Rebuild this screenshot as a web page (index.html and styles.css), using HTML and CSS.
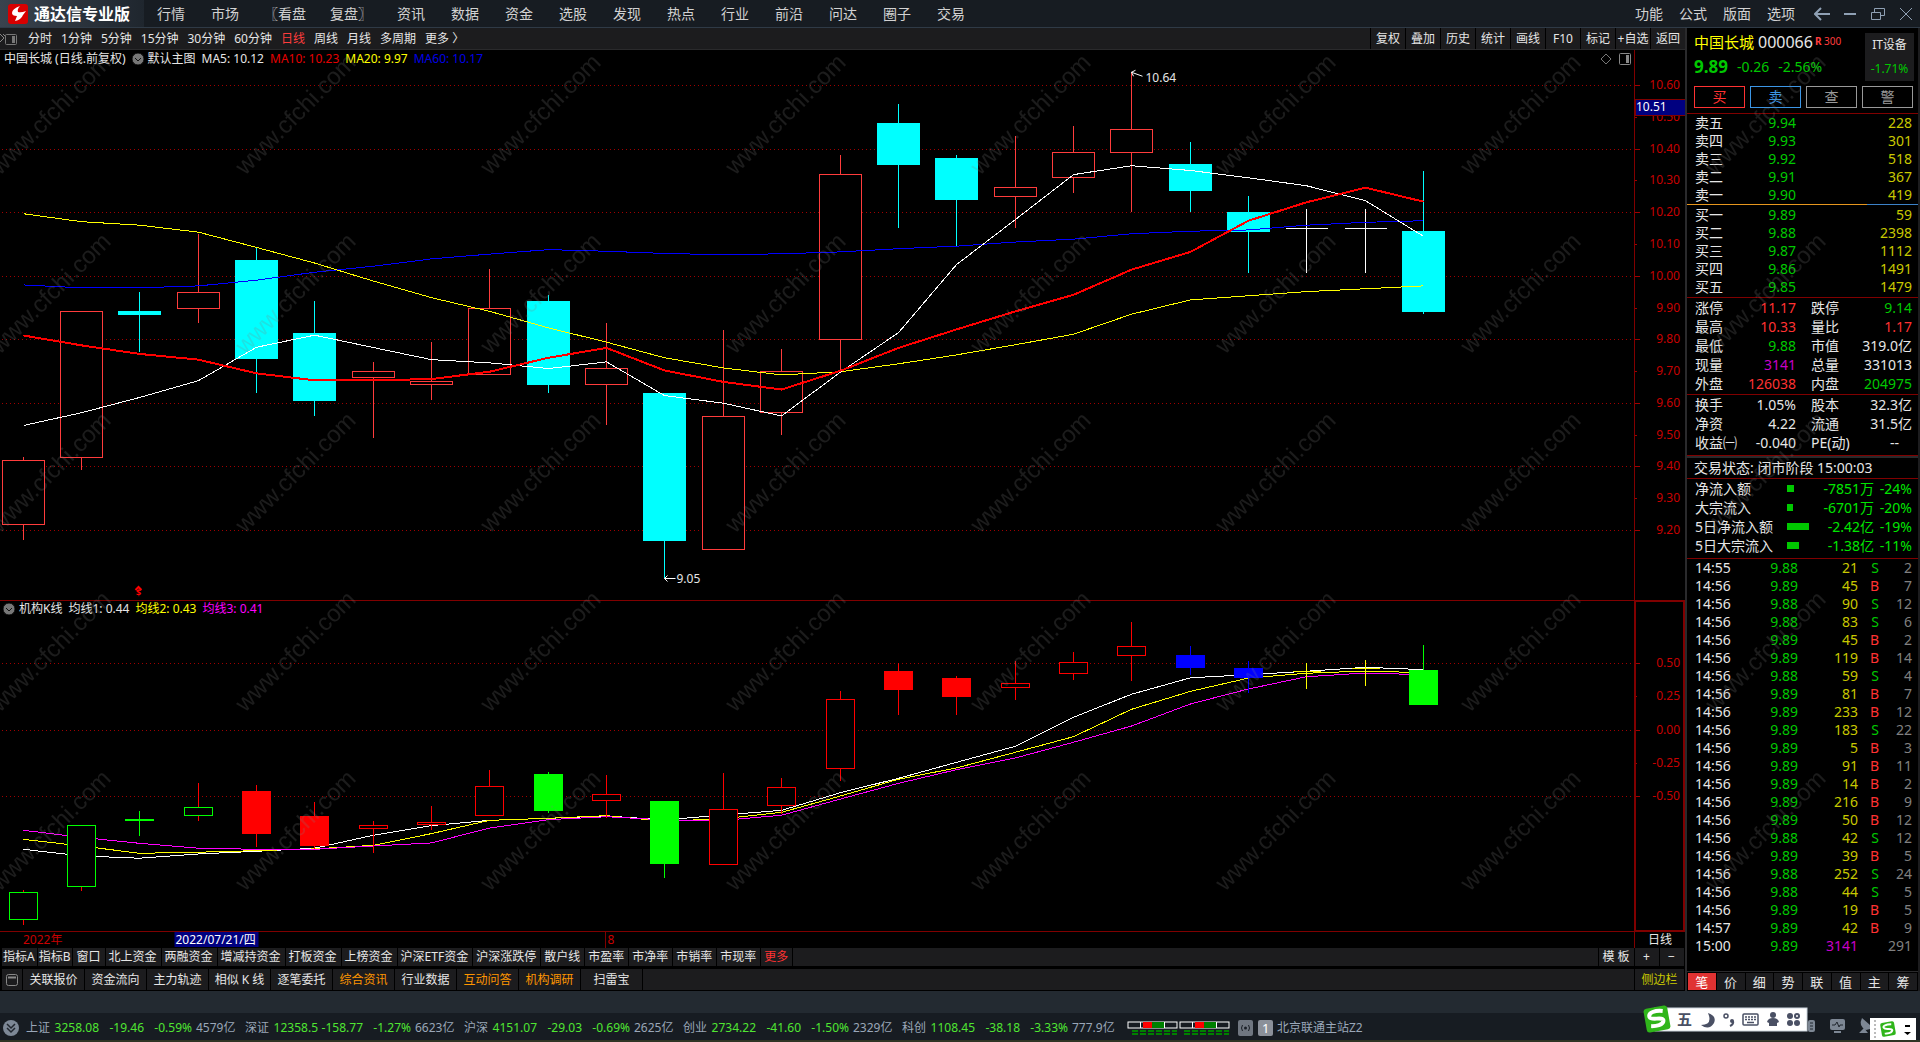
FILE: index.html
```
<!DOCTYPE html>
<html lang="zh-CN">
<head>
  <meta charset="UTF-8" />
  <meta name="viewport" content="width=device-width, initial-scale=1.0" />
  <title>通达信专业版</title>
  <link rel="stylesheet" href="styles.css">
</head>
<body>
  <header class="topbar">
    <div class="brand">
      <svg class="brand-logo" width="20" height="20" viewBox="0 0 20 20">
        <rect width="20" height="20" rx="3" fill="#d80000" />
        <path d="M12 2 Q4 5 4 9 Q4 12 9 12 L7 17 Q13 16 15 11 L18 7 Q13 9 10 8 Q9 5 12 2 Z" fill="#fff" />
      </svg>
      <h1>通达信专业版</h1>
    </div>
    <nav class="menu">
      <a href="#">行情</a>
      <a href="#">市场</a>
      <a href="#" class="group">〖看盘</a>
      <a href="#" class="group">复盘〗</a>
      <a href="#">资讯</a>
      <a href="#">数据</a>
      <a href="#">资金</a>
      <a href="#">选股</a>
      <a href="#">发现</a>
      <a href="#">热点</a>
      <a href="#">行业</a>
      <a href="#">前沿</a>
      <a href="#">问达</a>
      <a href="#">圈子</a>
      <a href="#">交易</a>
    </nav>
    <nav class="menu-right">
      <a href="#">功能</a>
      <a href="#">公式</a>
      <a href="#">版面</a>
      <a href="#">选项</a>
    </nav>
    <div class="window-buttons">
      <button aria-label="后退"><svg width="16" height="14" viewBox="0 0 16 14"><path d="M7 1 L1 7 L7 13 M1 7 H16" /></svg></button>
      <button aria-label="最小化"><svg width="16" height="14" viewBox="0 0 16 14"><path d="M2 7 H14" /></svg></button>
      <button aria-label="还原"><svg width="16" height="14" viewBox="0 0 16 14"><path class="thin" d="M1.5 5.5 H10.5 V12.5 H1.5 Z M4.5 5 V1.5 H14.5 V8.5 H11" /></svg></button>
      <button aria-label="关闭"><svg width="16" height="14" viewBox="0 0 16 14"><path class="thin" d="M2 1 L14 13 M14 1 L2 13" /></svg></button>
    </div>
  </header>

  <main class="workspace">
    <section class="left">
      <div class="toolbar">
        <button class="expand" aria-label="展开">
          <svg width="18" height="12" viewBox="0 0 18 12"><path d="M0 1 L4 5 L0 9 M3 1 L6 4" fill="none" stroke="#888" /><rect x="5.500" y="1.500" width="11" height="10" rx="1" fill="none" stroke="#777" /><rect x="12" y="3" width="3" height="7" fill="#777" /></svg>
        </button>
        <nav class="periods">
          <a href="#">分时</a>
          <a href="#">1分钟</a>
          <a href="#">5分钟</a>
          <a href="#">15分钟</a>
          <a href="#">30分钟</a>
          <a href="#">60分钟</a>
          <a href="#" class="active">日线</a>
          <a href="#">周线</a>
          <a href="#">月线</a>
          <a href="#">多周期</a>
          <a href="#">更多 〉</a>
        </nav>
        <div class="tools">
          <button>复权</button>
          <button>叠加</button>
          <button>历史</button>
          <button>统计</button>
          <button>画线</button>
          <button>F10</button>
          <button>标记</button>
          <button>+自选</button>
          <button>返回</button>
        </div>
      </div>

      <div class="panel panel-main">
        <div class="panel-head">
          <span>中国长城 (日线.前复权)</span>
          <svg class="drop" width="12" height="12" viewBox="0 0 12 12"><circle cx="6" cy="6" r="6" fill="#777" /><path d="M3 5 L6 8 L9 5" /></svg>
          <span>默认主图</span>
          <span class="gap">MA5: 10.12</span>
          <span class="gap ma10">MA10: 10.23</span>
          <span class="gap yellow">MA20: 9.97</span>
          <span class="gap blue">MA60: 10.17</span>
        </div>
        <div class="panel-icons">
          <svg width="12" height="12" viewBox="0 0 12 12"><path d="M6 1 L11 6 L6 11 L1 6 Z" fill="none" stroke="#777" /></svg>
          <svg width="12" height="12" viewBox="0 0 12 12"><rect x=".5" y=".5" width="11" height="11" rx="1" fill="none" stroke="#888" /><rect x="7" y="2" width="3" height="8" fill="#888" /></svg>
        </div>
        <svg class="chart" id="main-chart"></svg>
      </div>

      <div class="panel panel-sub">
        <div class="panel-head">
          <svg class="drop first" width="12" height="12" viewBox="0 0 12 12"><circle cx="6" cy="6" r="6" fill="#777" /><path d="M3 5 L6 8 L9 5" /></svg>
          <span>机构K线</span>
          <span class="gap">均线1: 0.44</span>
          <span class="gap yellow">均线2: 0.43</span>
          <span class="gap magenta">均线3: 0.41</span>
        </div>
        <svg class="chart" id="sub-chart"></svg>
      </div>

      <div class="dates">
        <svg class="date-axis" id="date-axis"></svg>
        <span class="date-period">日线</span>
      </div>

      <div class="tabs tabs-indicator">
        <button class="tight">指标A</button>
        <button class="tight">指标B</button>
        <button>窗口</button>
        <button>北上资金</button>
        <button>两融资金</button>
        <button>增减持资金</button>
        <button>打板资金</button>
        <button>上榜资金</button>
        <button>沪深ETF资金</button>
        <button>沪深涨跌停</button>
        <button>散户线</button>
        <button>市盈率</button>
        <button>市净率</button>
        <button>市销率</button>
        <button>市现率</button>
        <button class="red">更多</button>
        <span class="fill"></span>
        <button class="template">模 板</button>
        <button class="zoom">+</button>
        <button class="zoom">−</button>
      </div>
      <div class="tabs tabs-info">
        <button class="icon" aria-label="窗口"><svg width="12" height="12" viewBox="0 0 12 12"><rect x=".5" y=".5" width="11" height="11" rx="2" fill="none" stroke="#888" /><path d="M2 3.500 H10" stroke="#888" stroke-width="2" /></svg></button>
        <button>关联报价</button>
        <button>资金流向</button>
        <button>主力轨迹</button>
        <button>相似 K 线</button>
        <button>逐笔委托</button>
        <button class="orange">综合资讯</button>
        <button>行业数据</button>
        <button class="orange">互动问答</button>
        <button class="orange">机构调研</button>
        <button>扫雷宝</button>
        <span class="fill"></span>
        <button class="side-toggle">侧边栏</button>
      </div>
    </section>

    <aside class="quote">
      <div class="quote-head">
        <div class="quote-title">
          <div class="name-line"><span class="name">中国长城</span><span class="code">000066</span><span class="flags"><b>R</b> 300</span></div>
          <div class="price-line"><b>9.89</b><span>-0.26</span><span>-2.56%</span></div>
        </div>
        <div class="sector"><span>IT设备</span><span class="green">-1.71%</span></div>
      </div>
      <div class="trade">
        <button class="buy">买</button>
        <button class="sell">卖</button>
        <button>查</button>
        <button>警</button>
      </div>

      <table class="book">
        <tr><th>卖五</th><td class="green">9.94</td><td class="vol">228</td></tr>
        <tr><th>卖四</th><td class="green">9.93</td><td class="vol">301</td></tr>
        <tr><th>卖三</th><td class="green">9.92</td><td class="vol">518</td></tr>
        <tr><th>卖二</th><td class="green">9.91</td><td class="vol">367</td></tr>
        <tr><th>卖一</th><td class="green">9.90</td><td class="vol">419</td></tr>
      </table>
      <div class="ratio"></div>
      <table class="book bids">
        <tr><th>买一</th><td class="green">9.89</td><td class="vol">59</td></tr>
        <tr><th>买二</th><td class="green">9.88</td><td class="vol">2398</td></tr>
        <tr><th>买三</th><td class="green">9.87</td><td class="vol">1112</td></tr>
        <tr><th>买四</th><td class="green">9.86</td><td class="vol">1491</td></tr>
        <tr><th>买五</th><td class="green">9.85</td><td class="vol">1479</td></tr>
      </table>

      <table class="stats">
        <tr><th>涨停</th><td class="red">11.17</td><th>跌停</th><td class="green">9.14</td></tr>
        <tr><th>最高</th><td class="red">10.33</td><th>量比</th><td class="red">1.17</td></tr>
        <tr><th>最低</th><td class="green">9.88</td><th>市值</th><td>319.0亿</td></tr>
        <tr><th>现量</th><td class="purple">3141</td><th>总量</th><td>331013</td></tr>
        <tr><th>外盘</th><td class="red">126038</td><th>内盘</th><td class="green">204975</td></tr>
      </table>
      <table class="stats basics">
        <tr><th>换手</th><td>1.05%</td><th>股本</th><td>32.3亿</td></tr>
        <tr><th>净资</th><td>4.22</td><th>流通</th><td>31.5亿</td></tr>
        <tr><th>收益㈠</th><td>-0.040</td><th>PE(动)</th><td class="none">--</td></tr>
      </table>

      <p class="state">交易状态: 闭市阶段 15:00:03</p>

      <table class="flow">
        <tr><th>净流入额</th><td class="bar"><i style="width: 7px"></i></td><td>-7851万</td><td>-24%</td></tr>
        <tr><th>大宗流入</th><td class="bar"><i style="width: 6px"></i></td><td>-6701万</td><td>-20%</td></tr>
        <tr><th>5日净流入额</th><td class="bar"><i style="width: 22px"></i></td><td>-2.42亿</td><td>-19%</td></tr>
        <tr><th>5日大宗流入</th><td class="bar"><i style="width: 12px"></i></td><td>-1.38亿</td><td>-11%</td></tr>
      </table>

      <table class="ticks" id="ticks"></table>

      <div class="tabs tabs-quote">
        <button class="active">笔</button>
        <button>价</button>
        <button>细</button>
        <button>势</button>
        <button>联</button>
        <button>值</button>
        <button>主</button>
        <button>筹</button>
      </div>
    </aside>

    <svg class="watermark" aria-hidden="true">
      <defs>
        <pattern id="wm" x="-22" y="0" width="245" height="179" patternUnits="userSpaceOnUse">
          <text x="22" y="148" transform="rotate(-45 22 148)">www.cfchi.com</text>
        </pattern>
      </defs>
      <rect width="100%" height="100%" fill="url(#wm)" />
    </svg>
  </main>

  <footer class="status">
    <svg class="status-icon" width="16" height="16" viewBox="0 0 16 16"><circle cx="8" cy="8" r="8" fill="#7d8896" /><path d="M4 4 L8 8 L12 4 M4 8 L8 12 L12 8" fill="none" stroke="#20262e" stroke-width="1.500" /></svg>
    <div class="index"><span>上证</span><b>3258.08</b><b>-19.46</b><b>-0.59%</b><span>4579亿</span></div>
    <div class="index"><span>深证</span><b>12358.5</b><b>-158.77</b><b>-1.27%</b><span>6623亿</span></div>
    <div class="index"><span>沪深</span><b>4151.07</b><b>-29.03</b><b>-0.69%</b><span>2625亿</span></div>
    <div class="index"><span>创业</span><b>2734.22</b><b>-41.60</b><b>-1.50%</b><span>2329亿</span></div>
    <div class="index"><span>科创</span><b>1108.45</b><b>-38.18</b><b>-3.33%</b><span>777.9亿</span></div>
    <svg class="meter" width="104" height="14" viewBox="0 0 104 14">
      <g id="meter-one">
        <rect x="1" y="1" width="49" height="6" fill="#171c22" stroke="#fff" />
        <rect x="16" y="1" width="9" height="6" fill="#f00" />
        <rect x="25" y="1" width="12" height="6" fill="#008000" />
        <path d="M13.500 1 V7 M37.500 1 V7" stroke="#fff" />
        <path d="M5 10 H50 M5 13 H50" stroke="#008000" stroke-width="2" stroke-dasharray="6 2" />
      </g>
      <use href="#meter-one" x="52" />
    </svg>
    <svg class="net" width="36" height="16" viewBox="0 0 36 16">
      <rect width="15" height="16" rx="2" fill="#6f7680" /><rect x="20" width="15" height="16" rx="2" fill="#8b9099" />
      <circle cx="7.500" cy="8" r="1.500" fill="#1a1f26" />
      <path d="M4.500 5 Q2.500 8 4.500 11 M10.500 5 Q12.500 8 10.500 11" fill="none" stroke="#1a1f26" />
      <text x="24" y="13">1</text>
    </svg>
    <span class="server">北京联通主站Z2</span>

    <svg class="tray" width="62" height="16" viewBox="0 0 62 16">
      <rect x="0" y="2" width="7" height="12" rx="2" fill="#7d8794" /><path d="M2 5 H5 M2 8 H5 M2 11 H5" stroke="#20262e" />
      <rect x="22" y="1" width="15" height="11" rx="2" fill="#7d8794" /><path d="M24 7 H27 L29 4 L31 9 L32 7 H35" fill="none" stroke="#20262e" /><path d="M26 14 H33" stroke="#7d8794" stroke-width="2" />
      <path d="M54 0 Q50 8 58 12 L62 11 V7 Z M56 10 L51 15 H60" fill="#7d8794" />
    </svg>

    <div class="ime">
      <svg width="165" height="28" viewBox="0 0 165 28">
        <rect x="12" y="3" width="152" height="23" fill="#fff" stroke="#cdd6df" />
        <g transform="rotate(-10 14 14)"><rect x="2" y="2" width="24" height="24" rx="3" fill="#2fb51a" /><path d="M21 7 C14 5 6 6 7 11 C8 15 21 12 20 17 C19 21 12 21 7 20" fill="none" stroke="#fff" stroke-width="4" /></g>
        <text x="34" y="20">五</text>
        <path d="M65 8 Q70 20 58 20 Q66 26 71 18 Q74 11 65 8" fill="#4a5064" />
        <circle cx="83" cy="11" r="2" fill="none" stroke="#4a5064" stroke-width="1.500" /><circle cx="89" cy="16" r="2" fill="#4a5064" /><path d="M90 16 Q91 19 87 21" fill="none" stroke="#4a5064" stroke-width="2" />
        <rect x="100" y="9" width="15" height="11" rx="1" fill="none" stroke="#4a5064" stroke-width="1.500" />
        <path d="M102 12 H113 M102 14.500 H113" stroke="#4a5064" stroke-width="1.500" stroke-dasharray="2 1" /><path d="M104 17.500 H111" stroke="#4a5064" stroke-width="1.500" />
        <circle cx="130" cy="10" r="3" fill="#4a5064" /><path d="M124 17 Q125 13 130 13 Q135 13 136 17 L134 18 V21 H126 V18 Z" fill="#4a5064" />
        <g fill="#4a5064"><rect x="144" y="8" width="6" height="6" rx="3" /><rect x="144" y="15" width="6" height="6" rx="3" /><rect x="151" y="15" width="6" height="6" rx="3" /></g>
        <circle cx="154" cy="11" r="2" fill="none" stroke="#4a5064" stroke-width="2" />
      </svg>
    </div>
    <div class="ime-mini">
      <svg width="46" height="22" viewBox="0 0 46 22">
        <rect width="46" height="22" fill="#fff" />
        <path d="M5 2 V21" stroke="#bbb" stroke-width="2" stroke-dasharray="2 2" />
        <g transform="rotate(-10 18 11)"><rect x="11" y="4" width="14" height="14" rx="2" fill="#2fb51a" /><path d="M22 7 C17 6 13 7 14 9 C15 12 22 10 22 13 C21 16 17 15 14 15" fill="none" stroke="#fff" stroke-width="2" /></g>
        <path d="M35 8 H40" stroke="#000" stroke-width="2" /><path d="M34 14 H41 L37.500 17 Z" fill="#000" />
      </svg>
    </div>
  </footer>

  <script src="chart.js"></script>
</body>
</html>
```
FILE: styles.css
```
* {
  box-sizing: border-box;
}
body {
  margin: 0;
  min-height: 100vh;
  display: flex;
  flex-direction: column;
  background: #000;
  color: #e6e6e6;
  font-family: "Noto Sans", "Noto Sans CJK SC", sans-serif;
  font-size: 12px;
  line-height: 18px;
  overflow-x: hidden;
}
a {
  color: inherit;
  text-decoration: none;
}
button {
  margin: 0;
  padding: 0;
  border: none;
  background: none;
  color: inherit;
  font: inherit;
  cursor: pointer;
  white-space: nowrap;
}
table {
  border-collapse: collapse;
  table-layout: fixed;
  width: 100%;
}
th {
  font-weight: normal;
  text-align: left;
}
th, td {
  padding: 0;
  white-space: nowrap;
}
.red { color: #ff3232; }
.green { color: #00c800; }
.yellow { color: #ffff00; }
.blue { color: #0000e6; }
.magenta { color: #ff00ff; }
.purple { color: #c800c8; }
.orange { color: #ff9600; }
.ma10 { color: #e60000; }

/* top bar */
.topbar {
  display: flex;
  align-items: center;
  height: 28px;
  background: #171c22;
  border-bottom: 1px solid #2f3a46;
  font-size: 14px;
  color: #d2d2d2;
}
.brand {
  display: flex;
  align-items: center;
  gap: 6px;
  width: 144px;
  height: 27px;
  padding-left: 8px;
  background: linear-gradient(90deg, #3a434e, #1f262e);
}
.brand h1 {
  margin: 0;
  font-size: 16px;
  line-height: 22px;
  color: #fff;
}
.menu {
  display: flex;
  flex: 1;
}
.menu a {
  padding: 0 13px;
}
.menu .group {
  padding: 0 12px;
}
.menu-right {
  display: flex;
  gap: 16px;
}
.window-buttons {
  display: flex;
  gap: 12px;
  padding: 0 6px 0 19px;
}
.window-buttons svg {
  display: block;
  fill: none;
  stroke: #8fa0b4;
  stroke-width: 2;
}
.window-buttons .thin {
  stroke-width: 1;
}

/* layout */
.workspace {
  position: relative;
  flex: 1;
  display: grid;
  grid-template-columns: minmax(0, 1fr) 235px;
}
.left {
  display: flex;
  flex-direction: column;
  min-width: 0;
}
.toolbar {
  display: flex;
  height: 22px;
  background: #1c1c1e;
  border-bottom: 1px solid #2a2a2c;
  line-height: 22px;
}
.expand {
  width: 24px;
}
.expand svg {
  display: block;
}
.periods {
  display: flex;
  flex: 1;
  gap: 9px;
  padding-left: 4px;
}
.periods .active {
  color: #ff3c3c;
}
.tools {
  display: flex;
}
.tools button {
  width: 35px;
  border-left: 1px solid #000;
}

/* charts */
.panel {
  position: relative;
  display: flex;
  min-height: 0;
}
.panel-main {
  flex: 550 1 0;
}
.panel-sub {
  flex: 332 1 0;
}
.chart {
  flex: 1;
  width: 100%;
  height: 100%;
  position: absolute;
}
.chart text {
  font-size: 12px;
}
.panel-head {
  position: absolute;
  z-index: 1;
  top: 0;
  left: 4px;
  display: flex;
  align-items: center;
}
.panel-sub .panel-head {
  left: 3px;
}
.drop {
  margin: 0 4px 0 6px;
  fill: none;
  stroke: #111;
}
.drop.first {
  margin-left: 0;
}
.gap {
  margin-left: 6px;
}
.panel-icons {
  position: absolute;
  z-index: 1;
  top: 3px;
  right: 54px;
  display: flex;
  gap: 7px;
}
.dates {
  display: flex;
  height: 16px;
  line-height: 16px;
}
.date-axis {
  flex: 1;
  min-width: 0;
  height: 16px;
}
.date-period {
  width: 51px;
  border-left: 1px solid #800000;
  text-align: center;
}

/* tab rows */
.tabs {
  display: flex;
  background: #000;
}
.tabs button, .fill {
  background: #1c1c1e;
  border-right: 1px solid #000;
}
.fill {
  flex: 1;
}
.tabs-indicator {
  height: 18px;
  padding-left: 2px;
}
.tabs-indicator button {
  padding: 0 4px 0 3px;
}
.tabs-indicator .tight {
  padding: 0 2px 0 1px;
}
.tabs-indicator .template {
  width: 36px;
}
.tabs-indicator .zoom {
  width: 25px;
}
.tabs-info {
  height: 25px;
  padding: 2px 0 1px 2px;
  border-top: 1px solid #000;
  line-height: 20px;
}
.tabs-info button {
  width: 62px;
}
.tabs-info .icon {
  width: 21px;
}
.tabs-info .icon svg {
  display: block;
  margin: 0 auto;
}
.tabs-info .side-toggle {
  width: 50px;
  color: #c8c800;
}

/* quote sidebar */
.quote {
  display: flex;
  flex-direction: column;
  border-left: 2px solid #2a2a2c;
  border-right: 2px solid #1c1c1e;
  font-size: 14px;
}
.quote-head {
  display: flex;
  justify-content: space-between;
  padding: 5px 4px 0 7px;
}
.name-line {
  display: flex;
  height: 20px;
  line-height: 20px;
  font-size: 16px;
}
.name {
  margin-right: 4px;
  font-size: 15px;
  line-height: 18px;
  color: #ffff00;
}
.code {
  line-height: 18px;
}
.flags {
  margin-left: 2px;
  font-size: 10px;
  line-height: 16px;
  color: #ff3c3c;
}
.price-line {
  display: flex;
  gap: 9px;
  height: 28px;
  line-height: 28px;
  color: #00c800;
}
.price-line b {
  font-size: 17px;
}
.sector {
  display: flex;
  flex-direction: column;
  justify-content: space-around;
  width: 49px;
  height: 48px;
  background: #1c1c1e;
  text-align: center;
  font-size: 12px;
}
.trade {
  display: flex;
  gap: 5px;
  padding: 5px 5px 5px 7px;
}
.trade button {
  flex: 1;
  height: 22px;
  border: 1px solid #999;
  color: #999;
  line-height: 18px;
}
.trade .buy {
  border-color: #ff3232;
  color: #ff3232;
}
.trade .sell {
  border-color: #3c96e6;
  color: #3c96e6;
}
.quote th {
  padding-left: 8px;
}
.quote td {
  text-align: right;
}
.quote td:last-child {
  padding-right: 6px;
}
.book {
  border-top: 1px solid #800000;
}
.bids {
  border-top: none;
}
.book tr, .ticks tr {
  height: 18px;
}
.book th {
  width: 54px;
}
.book .green {
  width: 55px;
}
.vol {
  color: #c8c800;
}
.ratio {
  height: 1px;
  margin-bottom: 1px;
  background: linear-gradient(90deg, #e6961e 78%, #3c82c8 78%);
}
.stats {
  margin-top: 1px;
  border-top: 1px solid #800000;
  line-height: 19px;
}
.stats tr, .flow tr {
  height: 19px;
}
.stats th:first-child {
  width: 50px;
}
.stats td:nth-child(2) {
  width: 59px;
}
.stats th:nth-child(3) {
  width: 58px;
  padding-left: 15px;
}
.stats td.none {
  padding-right: 19px;
}
.basics {
  margin-bottom: 3px;
}
.state {
  margin: 0;
  padding-left: 7px;
  height: 23px;
  border-top: 1px solid #800000;
  box-shadow: inset 0 2px #2a2a2c;
  line-height: 24px;
}
.flow {
  border-top: 1px solid #800000;
  margin-bottom: 3px;
  line-height: 19px;
  color: #00e600;
}
.flow th {
  width: 100px;
  color: #e6e6e6;
}
.flow .bar {
  width: 22px;
}
.flow i {
  display: block;
  height: 7px;
  background: #00c800;
}
.flow td:nth-child(3) {
  width: 65px;
}
.ticks {
  border-top: 1px solid #800000;
  margin-bottom: auto;
}
.ticks .time { width: 60px; }
.ticks .price { width: 51px; }
.ticks .amount { width: 60px; }
.ticks .side { width: 21px; }
.ticks .count { color: #808080; }
.tabs-quote {
  height: 20px;
  padding: 1px 0 1px 1px;
  border-top: 1px solid #2a2a2c;
  font-size: 13px;
  line-height: 16px;
}
.tabs-quote button {
  flex: 1;
}
.tabs-quote .active {
  background: #e03232;
  color: #fff;
}

.watermark {
  position: absolute;
  top: 0;
  left: 0;
  width: 100%;
  height: calc(100% - 44px);
  pointer-events: none;
  z-index: 2;
}
.watermark text {
  font-family: "Liberation Sans", Arial, sans-serif;
  font-size: 24px;
  fill: rgba(128, 128, 128, 0.22);
}

/* status bar */
.status {
  position: relative;
  display: flex;
  align-items: center;
  height: 51px;
  padding: 25px 0 1px 3px;
  border-bottom: 2px solid #2f3424;
  background: linear-gradient(#232a31 22px, #171c22 22px);
  color: #9aa7b8;
}
.status-icon {
  margin-right: 7px;
}
.index {
  display: grid;
  grid-template-columns: 28px 45px 45px 48px 48px;
  margin-right: 5px;
}
.index b {
  font-weight: normal;
  text-align: right;
  color: #50e632;
}
.index span:last-child {
  padding-left: 4px;
}
.index:nth-of-type(5) {
  margin-right: 11px;
}
.net {
  margin: 0 3px 0 7px;
}
.net text {
  font-size: 13px;
  fill: #fff;
}
.tray {
  position: absolute;
  right: 50px;
  bottom: 6px;
}
.ime, .ime-mini {
  position: absolute;
}
.ime svg, .ime-mini svg {
  display: block;
}
.ime {
  right: 112px;
  bottom: 7px;
}
.ime text {
  font-size: 15px;
  font-weight: bold;
  fill: #4a5064;
}
.ime-mini {
  right: 4px;
  bottom: 0;
}
```
FILE: chart.js
```
const SVG = 'http://www.w3.org/2000/svg';
const AXIS = 51;   // width of the scale on the right
const FIRST = 23;  // centre of the first candle
const SLOTS = 28;

// open/close top, bottom, high, low, kind
const candles = [
  [9.42, 9.22, 9.43, 9.17, 'up'], [9.89, 9.43, 9.89, 9.39, 'up'], [9.89, 9.88, 9.95, 9.76, 'down'],
  [9.95, 9.90, 10.13, 9.85, 'up'], [10.05, 9.74, 10.09, 9.63, 'down'], [9.82, 9.61, 9.92, 9.56, 'down'],
  [9.70, 9.68, 9.73, 9.49, 'up'], [9.67, 9.66, 9.79, 9.61, 'up'], [9.90, 9.69, 10.02, 9.69, 'up'],
  [9.92, 9.66, 9.94, 9.63, 'down'], [9.71, 9.66, 9.85, 9.53, 'up'], [9.63, 9.17, 9.63, 9.05, 'down'],
  [9.56, 9.14, 9.83, 9.14, 'up'], [9.70, 9.57, 9.77, 9.50, 'up'], [10.32, 9.80, 10.38, 9.70, 'up'],
  [10.48, 10.35, 10.54, 10.15, 'down'], [10.37, 10.24, 10.38, 10.09, 'down'], [10.28, 10.25, 10.44, 10.15, 'up'],
  [10.39, 10.31, 10.47, 10.26, 'up'], [10.46, 10.39, 10.64, 10.20, 'up'], [10.35, 10.27, 10.42, 10.20, 'down'],
  [10.20, 10.14, 10.25, 10.01, 'down'], [10.15, 10.15, 10.21, 10.01, 'flat'], [10.15, 10.15, 10.21, 10.01, 'flat'],
  [10.14, 9.89, 10.33, 9.88, 'down']
];
const averages = [
  { color: '#0000ff', values: [9.971, 9.962, 9.962, 9.968, 9.986, 10.011, 10.030, 10.053, 10.068, 10.082, 10.077, 10.070, 10.066, 10.069, 10.075, 10.085, 10.093, 10.106, 10.115, 10.132, 10.140, 10.144, 10.159, 10.168, 10.173] },
  { color: '#ffff00', values: [10.195, 10.170, 10.159, 10.137, 10.089, 10.040, 9.983, 9.931, 9.888, 9.836, 9.791, 9.742, 9.710, 9.688, 9.698, 9.723, 9.751, 9.783, 9.816, 9.879, 9.924, 9.937, 9.950, 9.959, 9.968] },
  { color: '#ffffff', values: [9.529, 9.569, 9.617, 9.670, 9.775, 9.813, 9.774, 9.736, 9.726, 9.708, 9.729, 9.623, 9.599, 9.559, 9.697, 9.821, 10.035, 10.177, 10.318, 10.346, 10.331, 10.308, 10.283, 10.236, 10.124] },
  { color: '#ff0000', width: 2, values: [9.812, 9.781, 9.754, 9.736, 9.693, 9.671, 9.671, 9.675, 9.698, 9.742, 9.773, 9.702, 9.666, 9.642, 9.701, 9.773, 9.831, 9.888, 9.940, 10.019, 10.075, 10.173, 10.231, 10.277, 10.233] }
];

const subCandles = [
  [-1.222, -1.423, -1.207, -1.470, 'weak'], [-0.720, -1.179, -0.720, -1.214, 'weak'], [-0.673, -0.680, -0.613, -0.801, 'fall'],
  [-0.585, -0.641, -0.402, -0.688, 'weak'], [-0.462, -0.778, -0.417, -0.883, 'strong'], [-0.650, -0.868, -0.545, -0.902, 'strong'],
  [-0.720, -0.743, -0.688, -0.929, 'rise'], [-0.698, -0.713, -0.575, -0.753, 'rise'], [-0.427, -0.641, -0.305, -0.641, 'rise'],
  [-0.335, -0.605, -0.320, -0.626, 'fall'], [-0.487, -0.532, -0.342, -0.665, 'rise'], [-0.538, -1.004, -0.538, -1.117, 'fall'],
  [-0.600, -1.014, -0.327, -1.014, 'rise'], [-0.435, -0.570, -0.365, -0.635, 'rise'], [0.227, -0.292, 0.289, -0.387, 'rise'],
  [0.440, 0.305, 0.500, 0.109, 'strong'], [0.387, 0.252, 0.402, 0.109, 'strong'], [0.347, 0.317, 0.515, 0.222, 'rise'],
  [0.505, 0.423, 0.583, 0.372, 'rise'], [0.626, 0.558, 0.808, 0.365, 'rise'], [0.560, 0.470, 0.628, 0.410, 'pause'],
  [0.462, 0.395, 0.515, 0.274, 'pause'], [0.438, 0.438, 0.500, 0.305, 'even'], [0.460, 0.460, 0.523, 0.327, 'even'],
  [0.447, 0.192, 0.635, 0.184, 'fall']
];
const subAverages = [
  { color: '#ffffff', values: [-.901, -.951, -.968, -.936, -.916, -.893, -.795, -.723, -.683, -.668, -.650, -.680, -.643, -.608, -.475, -.367, -.247, -.126, .092, .265, .389, .412, .438, .468, .450] },
  { color: '#ffff00', values: [-.826, -.876, -.931, -.923, -.911, -.898, -.871, -.783, -.683, -.668, -.648, -.690, -.671, -.623, -.500, -.374, -.289, -.171, -.054, .152, .287, .387, .423, .440, .427] },
  { color: '#ff00ff', values: [-.758, -.811, -.856, -.893, -.901, -.901, -.876, -.853, -.741, -.678, -.656, -.680, -.683, -.645, -.523, -.405, -.302, -.214, -.096, .026, .192, .305, .397, .425, .412] }
];

// wick colour, border colour, fill
const kinds = {
  up: ['#ff3c3c', '#ff3c3c', '#000'],
  down: ['#00ffff', '#00ffff', '#00ffff'],
  flat: ['#ffffff', '#ffffff', '#fff'],
  weak: ['#ff0000', '#00ff00', '#000'],
  rise: ['#ff0000', '#ff0000', '#000'],
  strong: ['#ff0000', '#ff0000', '#f00'],
  fall: ['#00ff00', '#00ff00', '#0f0'],
  pause: ['#0000ff', '#0000ff', '#00f'],
  even: ['#ffff00', '#ffff00', '#ff0']
};

function add(svg, name, attrs, text) {
  const el = document.createElementNS(SVG, name);
  for (const key in attrs) el.setAttribute(key, attrs[key]);
  if (text !== undefined) el.textContent = text;
  svg.appendChild(el);
  return el;
}

function line(svg, x1, y1, x2, y2, color, extra) {
  add(svg, 'line', Object.assign({ x1, y1, x2, y2, stroke: color, 'shape-rendering': 'crispEdges' }, extra));
}

function centre(plot, i) {
  return Math.floor(FIRST + i * plot / SLOTS) + 0.5;
}

function drawCandles(svg, data, plot, y, bodyWidth) {
  const half = Math.floor(bodyWidth / 2);
  data.forEach((c, i) => {
    const x = centre(plot, i);
    const [wick, border, fill] = kinds[c[4]];
    const top = Math.round(y(c[0])) + 0.5;
    const bottom = Math.round(y(c[1])) + 0.5;
    line(svg, x, y(c[2]), x, y(c[3]), wick);
    if (top === bottom) {
      line(svg, x - half, top, x + half, top, border);
    } else {
      add(svg, 'rect', { x: x - half, y: top, width: half * 2, height: bottom - top, fill, stroke: border, 'shape-rendering': 'crispEdges' });
    }
  });
}

function drawAverages(svg, data, plot, y) {
  data.forEach(avg => {
    const points = avg.values.map((v, i) => centre(plot, i) + ',' + y(v)).join(' ');
    add(svg, 'polyline', { points, fill: 'none', stroke: avg.color, 'stroke-width': avg.width || 1, 'shape-rendering': 'crispEdges' });
  });
}

function drawScale(svg, width, plot, y, from, step, count) {
  for (let i = 0; i < count; i++) {
    const value = from - i * step;
    const py = Math.round(y(value)) + 0.5;
    const major = i % 2 === 0;
    if (major) line(svg, 2, py, plot, py, '#a00000', { 'stroke-dasharray': '1 3' });
    line(svg, plot, py, plot + (major ? 6 : 3), py, '#a00000');
    add(svg, 'text', { x: width - 5, y: py + 3, fill: '#c80000', 'text-anchor': 'end' }, value.toFixed(2));
  }
}

function drawMain() {
  const svg = document.getElementById('main-chart');
  svg.innerHTML = '';
  const width = svg.clientWidth, height = svg.clientHeight, plot = width - AXIS;
  const high = 10.710, low = 8.980;
  const y = v => (high - v) / (high - low) * height;

  drawScale(svg, width, plot, y, 10.60, 0.10, 15);
  line(svg, plot + 0.5, 0, plot + 0.5, height, '#800000');
  drawCandles(svg, candles, plot, y, 43);
  drawAverages(svg, averages, plot, y);

  const py = Math.round(y(10.51));
  add(svg, 'rect', { x: plot + 1, y: py - 15, width: AXIS - 1, height: 16, fill: '#000080', stroke: '#800000', 'shape-rendering': 'crispEdges' });
  add(svg, 'text', { x: plot + 2, y: py - 3, fill: '#fff' }, '10.51');

  const hx = centre(plot, 19), hy = y(10.64);
  add(svg, 'path', { d: `M${hx + 11} ${hy + 4} L${hx} ${hy} M${hx + 4} ${hy - 2} L${hx} ${hy} L${hx + 2} ${hy + 4}`, fill: 'none', stroke: '#fff' });
  add(svg, 'text', { x: hx + 14, y: hy + 10, fill: '#e6e6e6' }, '10.64');

  const lx = centre(plot, 11), ly = Math.round(y(9.05)) + 0.5;
  add(svg, 'path', { d: `M${lx + 11} ${ly} H${lx} M${lx + 3} ${ly - 3} L${lx} ${ly} L${lx + 3} ${ly + 3}`, fill: 'none', stroke: '#fff' });
  add(svg, 'text', { x: lx + 12, y: ly + 4, fill: '#e6e6e6' }, '9.05');

  // dividend mark
  const dx = centre(plot, 2) - 1;
  add(svg, 'path', { d: `M${dx - 3} ${height - 10} L${dx} ${height - 13} L${dx + 3} ${height - 10}`, fill: 'none', stroke: '#f00', 'stroke-width': 2 });
  add(svg, 'text', { x: dx, y: height - 4, fill: '#f00', 'text-anchor': 'middle', style: 'font-size: 9px; font-weight: bold' }, '$');
}

function drawSub() {
  const svg = document.getElementById('sub-chart');
  svg.innerHTML = '';
  const width = svg.clientWidth, height = svg.clientHeight, plot = width - AXIS;
  const high = 0.974, low = -1.523;
  const y = v => (high - v) / (high - low) * height;

  drawScale(svg, width, plot, y, 0.50, 0.25, 5);
  drawAverages(svg, subAverages, plot, y);
  drawCandles(svg, subCandles, plot, y, 29);
  line(svg, 0, 0.5, width, 0.5, '#800000');
  line(svg, 0, height - 0.5, width, height - 0.5, '#800000');
  add(svg, 'rect', { x: plot + 1, y: 1, width: AXIS - 2, height: height - 2, fill: 'none', stroke: '#800000', 'stroke-width': 2, 'shape-rendering': 'crispEdges' });
}

function drawDates() {
  const svg = document.getElementById('date-axis');
  svg.innerHTML = '';
  const plot = svg.clientWidth;
  add(svg, 'text', { x: FIRST, y: 12, fill: '#c80000' }, '2022年');
  const x = centre(plot, 3);
  add(svg, 'rect', { x: x - 24, y: 0, width: 84, height: 15, fill: '#000080' });
  add(svg, 'text', { x: x - 23, y: 12, fill: '#fff' }, '2022/07/21/四');
  line(svg, centre(plot, 10) - 1, 0, centre(plot, 10) - 1, 16, '#800000');
  add(svg, 'text', { x: centre(plot, 10) + 1, y: 12, fill: '#c80000' }, '8');
}

const ticks = `14:55 9.88 21 S 2
14:56 9.89 45 B 7
14:56 9.88 90 S 12
14:56 9.88 83 S 6
14:56 9.89 45 B 2
14:56 9.89 119 B 14
14:56 9.88 59 S 4
14:56 9.89 81 B 7
14:56 9.89 233 B 12
14:56 9.89 183 S 22
14:56 9.89 5 B 3
14:56 9.89 91 B 11
14:56 9.89 14 B 2
14:56 9.89 216 B 9
14:56 9.89 50 B 12
14:56 9.88 42 S 12
14:56 9.89 39 B 5
14:56 9.88 252 S 24
14:56 9.88 44 S 5
14:56 9.89 19 B 5
14:57 9.89 42 B 9
15:00 9.89 3141 - 291`;

document.getElementById('ticks').innerHTML = ticks.split('\n').map(row => {
  const [time, price, amount, side, count] = row.split(' ');
  const color = side === 'B' ? 'red' : 'green';
  return `<tr><th class="time">${time}</th><td class="price green">${price}</td>
    <td class="amount ${side === '-' ? 'purple' : 'vol'}">${amount}</td>
    <td class="side ${color}">${side === '-' ? '' : side}</td><td class="count">${count}</td></tr>`;
}).join('');

function draw() {
  drawMain();
  drawSub();
  drawDates();
}
draw();
window.addEventListener('resize', draw);
```
